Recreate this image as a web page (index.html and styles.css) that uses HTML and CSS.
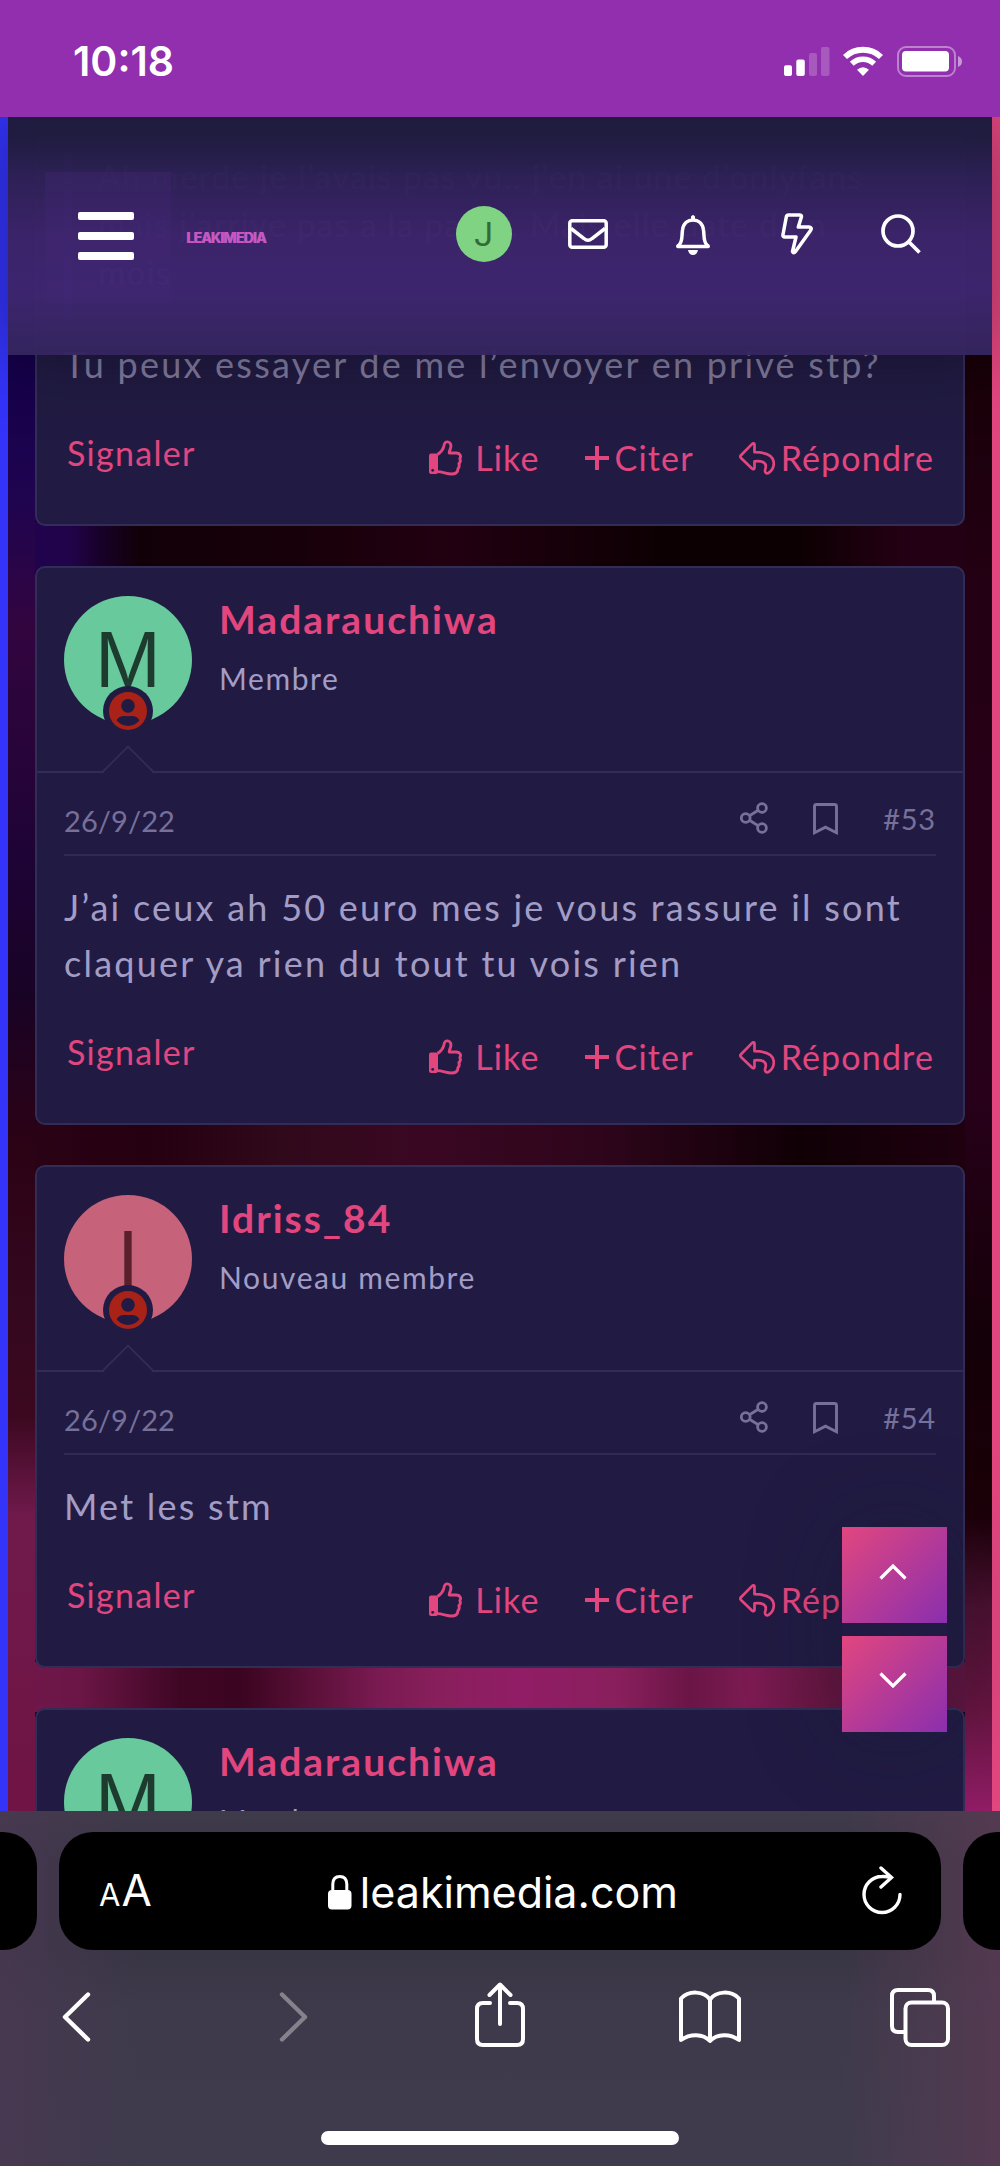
FILE: index.html
```html
<!DOCTYPE html>
<html lang="fr">
<head>
<meta charset="utf-8">
<title>Leakimedia</title>
<link rel="stylesheet" href="styles.css">
</head>
<body>
<svg class="sprite" aria-hidden="true">
  <symbol id="i-like" viewBox="0 0 34 36">
    <rect x="1" y="13.5" width="9" height="20.5" rx="2" fill="currentColor"/>
    <circle cx="4.7" cy="30.3" r="1.4" class="cut"/>
    <path d="M9.500 14.500C14 11.500 15.500 8.500 16 5.500C16.300 2.500 18 1.700 19.700 1.900C22.500 2.300 23.300 4.800 22.700 7.500C22.300 9.600 21.200 11 21.200 13H28.500C32.500 13.300 33.300 16.500 31.800 18.500C32.700 20.400 32.300 22.500 30.900 23.700C31.600 25.700 31.100 27.500 29.900 28.700C30 32.500 27.500 34 23.500 34C18.500 34 14.500 31.600 9.500 31.600" fill="none" stroke="currentColor" stroke-width="2.900" stroke-linejoin="round"/>
  </symbol>
  <symbol id="i-plus" viewBox="0 0 24 24">
    <path d="M12 0V24M0 12H24" fill="none" stroke="currentColor" stroke-width="4"/>
  </symbol>
  <symbol id="i-reply" viewBox="0 0 36 33">
    <path d="M15.500 2.500C15.500 1.300 14 1 13.200 1.900L2 13.200C1 14.200 1 15 2 16L13.200 26.700C14 27.600 15.500 27.200 15.500 26V19.300C24 18.500 28.500 21 26.200 27.500C25.500 30 27 32 29.500 31C33 28.800 34.800 25 34.800 21C34.500 13 27 10.300 15.500 10.200Z" fill="none" stroke="currentColor" stroke-width="2.700" stroke-linejoin="round"/>
  </symbol>
  <symbol id="i-share" viewBox="0 0 28 32">
    <g fill="none" stroke="currentColor" stroke-width="2.800"><circle cx="5.700" cy="16" r="4.400"/><circle cx="22" cy="6" r="4.400"/><circle cx="22" cy="26" r="4.400"/><path d="M9.500 13.700L18.200 8.300M9.500 18.300L18.200 23.700"/></g>
  </symbol>
  <symbol id="i-mark" viewBox="0 0 25 32">
    <path d="M1.500 29.700V3.500Q1.500 1.500 3.500 1.500H21.500Q23.500 1.500 23.500 3.500V29.700L12.500 24.200Z" fill="none" stroke="currentColor" stroke-width="2.900"/>
  </symbol>
  <symbol id="i-user" viewBox="0 0 40 40">
    <circle cx="20" cy="20" r="19.500" fill="#a82218"/>
    <circle cx="20" cy="14.700" r="7" class="cut"/>
    <path d="M8.300 29.500C10.500 25.500 14 24.500 20 25.500C26 24.500 29.500 25.500 31.700 29.500C28.500 33.700 24.500 35.300 20 35.300C15.500 35.300 11.500 33.700 8.300 29.500Z" class="cut"/>
  </symbol>
  <symbol id="i-notch" viewBox="0 0 52 28">
    <path d="M2 26L26 2L50 26V28H2Z" class="cut"/>
    <path d="M1 26.500L26 1.500L51 26.500" fill="none" stroke="#322d57" stroke-width="1.800"/>
  </symbol>
</svg>

<div class="status">
  <time class="clock">10:18</time>
  <svg class="signal" width="46" height="29" viewBox="0 0 46 29"><g fill="#fff"><rect y="18.300" width="8" height="10.700" rx="2"/><rect x="12.300" y="12.500" width="8.500" height="16.500" rx="2"/><g opacity=".2"><rect x="25" y="6" width="8" height="23" rx="2"/><rect x="37" width="8.500" height="29" rx="2"/></g></g></svg>
  <svg class="wifi" width="40" height="30" viewBox="0 0 40 30"><g fill="none" stroke="#fff"><path d="M2 11A26 26 0 0 1 38 11" stroke-width="5.800"/><path d="M8.800 17.800A16 16 0 0 1 31.200 17.800" stroke-width="5.400"/></g><path d="M20 30L14 23.800Q20 18.500 26 23.800Z" fill="#fff"/></svg>
  <svg width="66" height="31" viewBox="0 0 66 31"><rect x="1" y="1" width="57" height="29" rx="8" fill="none" stroke="#fff" stroke-opacity=".4" stroke-width="2"/><rect x="5" y="5" width="47" height="20.500" rx="4" fill="#fff"/><path d="M61 10Q65 11.500 65 15.500T61 21Z" fill="#fff" opacity=".5"/></svg>
</div>

<div class="page">
  <header class="header">
    <button class="burger" aria-label="Menu"><i></i><i></i><i></i></button>
    <span class="logo">LEAKIMEDIA</span>
    <nav class="tools">
      <span class="me">J</span>
      <svg width="40" height="30" viewBox="0 0 40 30"><g fill="none" stroke="#fff" stroke-width="3.500"><rect x="1.800" y="1.800" width="36.400" height="26.400" rx="2.500"/><path d="M3 9.500L16 19.500Q20 23 24 19.500L37 9.500"/></g></svg>
      <svg width="36" height="41" viewBox="0 0 36 41"><path d="M4 31C8 27 6.500 22 7.500 16C8.500 9 13 6 18 6S27.500 9 28.500 16C29.500 22 28 27 32 31Q34.500 32.500 32 32.500H4Q1.500 32.500 4 31Z" fill="none" stroke="#fff" stroke-width="3.500"/><path d="M16 6V2.500Q18 -.5 20 2.500V6ZM13 36H23Q22 41 18 41T13 36Z" fill="#fff"/></svg>
      <svg width="32" height="42" viewBox="0 0 32 42"><path d="M7.500 2H18.500Q21 2 20.300 4.300L17.300 14H28Q31.500 14.500 29.500 17.500L14.500 38.500Q12.500 41 11.500 38.500L15 24H4Q1.500 24 2 21.500L5.300 4Q5.800 2 7.500 2Z" fill="none" stroke="#fff" stroke-width="3.500" stroke-linejoin="round"/></svg>
      <svg width="41" height="41" viewBox="0 0 41 41"><g fill="none" stroke="#fff" stroke-width="3.700"><circle cx="17" cy="17" r="15"/><path d="M27.500 27.500L38.500 38.500"/></g></svg>
    </nav>
  </header>

  <main class="feed">
    <article class="post post-first">
      <blockquote class="quote">Ah merde je l’avais pas vu.. j’en ai une d’onlyfans<br>mais j’arrive pas a la payer. Mais elle date d’un<br>mois</blockquote>
      <p class="message">Tu peux essayer de me l’envoyer en privé stp?</p>
      <footer class="actions"><a class="report">Signaler</a><a><svg width="34" height="36"><use href="#i-like"/></svg>Like</a><a class="tight"><svg width="24" height="24"><use href="#i-plus"/></svg>Citer</a><a class="tight"><svg width="36" height="33"><use href="#i-reply"/></svg>Répondre</a></footer>
    </article>

    <article class="post">
      <div class="user">
        <div class="avatar green">M<svg class="badge" width="50" height="50"><use href="#i-user" x="5.500" y="5.500" width="39" height="39"/></svg></div>
        <div><h3>Madarauchiwa</h3><h5>Membre</h5></div>
        <svg class="notch" width="52" height="28"><use href="#i-notch"/></svg>
      </div>
      <div class="meta"><time>26/9/22</time><svg width="28" height="32"><use href="#i-share"/></svg><svg class="mark" width="25" height="32"><use href="#i-mark"/></svg><span>#53</span></div>
      <p class="message">J’ai ceux ah 50 euro mes je vous rassure il sont<br>claquer ya rien du tout tu vois rien</p>
      <footer class="actions"><a class="report">Signaler</a><a><svg width="34" height="36"><use href="#i-like"/></svg>Like</a><a class="tight"><svg width="24" height="24"><use href="#i-plus"/></svg>Citer</a><a class="tight"><svg width="36" height="33"><use href="#i-reply"/></svg>Répondre</a></footer>
    </article>

    <article class="post">
      <div class="user">
        <div class="avatar rose">I<svg class="badge" width="50" height="50"><use href="#i-user" x="5.500" y="5.500" width="39" height="39"/></svg></div>
        <div><h3>Idriss_84</h3><h5>Nouveau membre</h5></div>
        <svg class="notch" width="52" height="28"><use href="#i-notch"/></svg>
      </div>
      <div class="meta"><time>26/9/22</time><svg width="28" height="32"><use href="#i-share"/></svg><svg class="mark" width="25" height="32"><use href="#i-mark"/></svg><span>#54</span></div>
      <p class="message">Met les stm</p>
      <footer class="actions"><a class="report">Signaler</a><a><svg width="34" height="36"><use href="#i-like"/></svg>Like</a><a class="tight"><svg width="24" height="24"><use href="#i-plus"/></svg>Citer</a><a class="tight"><svg width="36" height="33"><use href="#i-reply"/></svg>Répondre</a></footer>
    </article>

    <article class="post">
      <div class="user">
        <div class="avatar green">M</div>
        <div><h3>Madarauchiwa</h3><h5>Membre</h5></div>
      </div>
    </article>
  </main>

  <div class="jump">
    <button aria-label="Haut"><svg width="28" height="17" viewBox="0 0 28 17"><path d="M1.500 15.500L14 3L26.500 15.500" fill="none" stroke="#fff" stroke-width="3.200"/></svg></button>
    <button aria-label="Bas"><svg width="28" height="17" viewBox="0 0 28 17"><path d="M1.500 1.500L14 14L26.500 1.500" fill="none" stroke="#fff" stroke-width="3.200"/></svg></button>
  </div>
</div>

<div class="browser">
  <div class="tabs">
    <div class="tab"></div>
    <div class="tab address">
      <span class="size"><small>A</small>A</span>
      <span class="host"><svg width="24" height="35" viewBox="0 0 24 35"><rect y="15" width="23.500" height="19.500" rx="4" fill="#fff"/><path d="M4.800 16V9Q5 1.500 11.800 1.500T18.800 9V16" fill="none" stroke="#fff" stroke-width="3"/></svg>leakimedia.com</span>
      <svg class="reload" width="41" height="49" viewBox="0 0 41 49"><g fill="none" stroke="#fff" stroke-width="3.400" stroke-linecap="round"><path d="M38 28.500A18 18 0 1 1 20 10.500Q25 10.300 28.500 11.500"/><path d="M19 2L29.500 11.500L19 21"/></g></svg>
    </div>
    <div class="tab"></div>
  </div>
  <div class="bar">
    <svg width="30" height="50" viewBox="0 0 30 50"><path d="M26 2.500L3 25L26 47.500" fill="none" stroke="#fff" stroke-width="4.400" stroke-linecap="round" stroke-linejoin="round"/></svg>
    <svg width="30" height="50" viewBox="0 0 30 50"><path d="M4 2.500L27 25L4 47.500" fill="none" stroke="#85828c" stroke-width="4.400" stroke-linecap="round" stroke-linejoin="round"/></svg>
    <svg class="up" width="52" height="66" viewBox="0 0 52 66"><g fill="none" stroke="#fff" stroke-width="4" stroke-linecap="round" stroke-linejoin="round"><path d="M16 21H9Q3 21 3 27V57Q3 63 9 63H43Q49 63 49 57V27Q49 21 43 21H36"/><path d="M26 42V3M15.500 13L26 2.500L36.500 13"/></g></svg>
    <svg width="64" height="54" viewBox="0 0 64 54"><path d="M32 9.500C26 1 11 0 3 8.500V50C12 43.500 25 43.500 32 51C39 43.500 52 43.500 61 50V8.500C53 0 38 1 32 9.500ZV51" fill="none" stroke="#fff" stroke-width="4" stroke-linejoin="round"/></svg>
    <svg width="62" height="60" viewBox="0 0 62 60"><g fill="none" stroke="#fff" stroke-width="4"><rect x="16.500" y="15.500" width="42.500" height="42.500" rx="6"/><path d="M45 15V9Q45 3 39 3H9Q3 3 3 9V39Q3 45 9 45H16"/></g></svg>
  </div>
  <div class="home"></div>
</div>
</body>
</html>
```
FILE: styles.css
```css
* { box-sizing: border-box; margin: 0; padding: 0; }
body { width: 1000px; height: 2166px; overflow: hidden; display: flex; flex-direction: column; font-family: Lato, "Open Sans", sans-serif; background: #211b43; }
svg { display: block; flex: none; }
button { border: 0; }
.sprite { position: absolute; width: 0; height: 0; }
.cut { fill: #211b43; }

.status { height: 117px; flex: none; background: #912fae; display: flex; align-items: flex-start; padding: 46px 38px 0 73px; color: #fff; }
.clock { font: 600 41px/48px Inter, sans-serif; margin-top: -9px; margin-right: auto; }
.signal { margin: 1px 13px 0 0; }
.wifi { margin-right: 14px; }
.status svg:last-child { margin-right: -1px; }

.page {
  position: relative; height: 1694px; flex: none; overflow: hidden; padding: 0 35px;
  background:
    linear-gradient(90deg, #3333f9 8px, transparent 8px, transparent 992px, #e2467f 992px),
    linear-gradient(#15004a 238px, #1f0450 380px, #32053f 510px, #1e0336 745px, #190325 880px, #2c0215 1030px, #34081f 1190px, #3c0820 1300px, #701a4c 1400px, #6f1444) 0 0 / 35px 100% no-repeat,
    linear-gradient(#180008 238px, #240014 480px, #28001a 980px, #140008 1220px, #1c0009 1400px, #4a1030 1490px, #65143f 1590px, #901d66) 100% 0 / 35px 100% no-repeat,
    linear-gradient(90deg, #1f0350, #21034a 7%, #18012a 10%, #120008 14%, #18000a 30%, #220011 45%, #0d0003 66%, #0d0003 80%, #230013 90%) 0 405px / 100% 50px no-repeat,
    linear-gradient(90deg, #2c0317, #240010 15%, #30091a 28%, #3a0722 42%, #2e051b 60%, #100006 80%, #220011) 0 1005px / 100% 50px no-repeat,
    linear-gradient(90deg, #72174c, #6b1646 8%, #3f0624 18%, #3b0420 24%, #5a1038 31%, #7a1a52 38%, #881f5c 44%, #911d66 52%, #881f5c 62%, #6a1545 69%, #7c1b52 75%, #64153f 83%, #5c1440) 0 1545px / 100% 50px no-repeat,
    #1c0010;
}

.header {
  position: absolute; z-index: 2; left: 8px; right: 8px; top: 0; height: 238px;
  display: flex; align-items: center; padding: 0 38px 4px 37px;
  background: linear-gradient(rgba(32,28,64,.98) 20px, rgba(46,33,87,.98) 62px, rgba(60,36,106,.975) 120px, rgba(62,38,112,.97) 170px, rgba(52,37,94,.97));
  box-shadow: 0 0 70px rgba(0,0,0,.35);
}
.burger { width: 126px; height: 131px; margin-top: 7px; background: rgba(70,40,120,.3); display: flex; flex-direction: column; align-items: center; justify-content: center; gap: 12px; padding: 0 4px 3px 0; }
.burger i { width: 56px; height: 8px; border-radius: 2px; background: #fff; }
.logo { font: 700 14px/16px Inter, sans-serif; letter-spacing: -.75px; margin: 8px 0 0 15px; color: #cf52bd; text-shadow: 1px 0 #8a66c8; }
.tools { margin-left: auto; display: grid; grid-template-columns: repeat(5, 104.500px); place-items: center; }
.me { width: 56px; height: 56px; border-radius: 50%; background: #7fd383; color: #336b37; font: 34px/57px Roboto, sans-serif; text-align: center; }

.feed { display: flex; flex-direction: column; gap: 40px; }
.post { border: 2px solid #322d57; border-radius: 10px; background: #211b43; flex: none; }
.post-first { border-top: 0; border-radius: 0 0 10px 10px; }
.quote { margin: 35px 27px 17px; padding: 0 0 23px 26px; border-left: 8px solid #3b3bb0; color: #a39dc6; font-size: 33px; line-height: 48px; letter-spacing: 1.400px; white-space: nowrap; }
.post-first .message { padding-top: 0; color: #807a9f; }
.user { position: relative; height: 205px; padding: 28px 27px 0; display: flex; gap: 27px; border-bottom: 2px solid #322d57; }
.avatar { position: relative; width: 128px; height: 128px; border-radius: 50%; text-align: center; font: 79px/128px "Liberation Sans", Arial, sans-serif; }
.green { background: #67c99c; color: #1d3b2e; }
.rose { background: #c6627a; color: #59202b; }
.badge { position: absolute; left: 39px; top: 90px; border-radius: 50%; background: #211b43; }
.notch { position: absolute; left: 65px; bottom: -2px; }
h3 { color: #e2467f; font-size: 39px; line-height: 46px; letter-spacing: 2px; }
h5 { color: #a39dc6; font-size: 30px; line-height: 36px; font-weight: 400; letter-spacing: 1.600px; margin-top: 18px; }
.meta { height: 83px; margin: 0 27px; padding-top: 26px; display: flex; border-bottom: 2px solid #302b55; color: #76709a; font-size: 29px; line-height: 40px; }
.meta time { margin: 2px auto 0 0; letter-spacing: .1px; }
.meta svg { margin-top: 3px; }
.meta .mark { margin: 4px 45px 0; }
.meta span { letter-spacing: .8px; }
.message { padding: 23px 27px 0; color: #a39dc6; font-size: 36px; line-height: 56px; letter-spacing: 2.240px; white-space: nowrap; }
.actions { height: 132px; padding: 46px 29px 0 30px; display: flex; color: #e2467f; font-size: 34px; line-height: 40px; letter-spacing: 1.150px; }
.actions a { display: flex; align-items: center; gap: 13px; height: 40px; margin-left: 45px; }
.actions .tight { gap: 6px; }
.actions .report { margin: -5px auto 0 0; letter-spacing: 1.300px; }

.jump { position: absolute; z-index: 3; right: 53px; top: 1410px; display: grid; gap: 13px; border-radius: 20px; box-shadow: 0 0 90px rgba(20,24,40,.35); }
.jump button { width: 105px; height: 96px; display: grid; place-items: center; padding: 0 4px 8px 0; background: linear-gradient(135deg, #e2467f, #8a2fae); }

.browser { flex: 1; background: linear-gradient(90deg, rgba(74,56,82,.75), transparent 14%, transparent 84%, rgba(86,58,82,.9)), linear-gradient(#3f3b4a, #383544 50px, #383544 140px, #3e3a4b 200px, #3e3b4d); overflow: hidden; }
.tabs { display: grid; grid-template-columns: 882px 882px 882px; gap: 22px; margin: 21px 0 0 -845px; }
.tab { height: 118px; border-radius: 34px; background: #000; }
.address { display: flex; align-items: center; justify-content: space-between; padding: 0 38px 0 40px; color: #fff; font: 43px/52px Inter, sans-serif; }
.size { font-size: 44px; margin-top: 3px; }
.size small { font-size: 31px; margin-right: 1px; }
.host { display: flex; align-items: center; gap: 8px; margin: 2px 0 0 -8px; }
.reload { margin-top: -1px; }
.bar { height: 112px; margin-top: 11px; display: grid; grid-template-columns: 154px 278px 136px 283px 138px; place-items: center; }
.up { margin-top: -4px; }
.home { width: 358px; height: 14px; margin: 58px auto 0; border-radius: 7px; background: #fff; }
```
